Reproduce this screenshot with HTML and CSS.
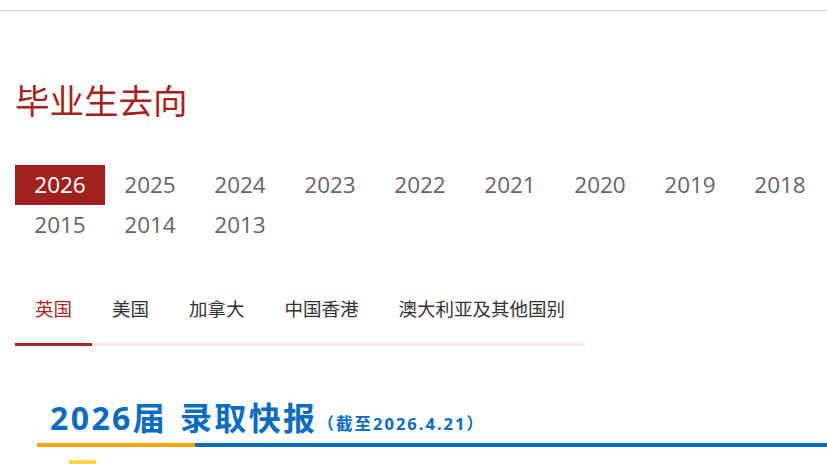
FILE: index.html
```html
<!DOCTYPE html>
<html lang="zh-CN">
<head>
<meta charset="utf-8">
<title>毕业生去向</title>
<link rel="stylesheet" href="styles.css">
</head>
<body>
<div class="topbar"></div>
<main class="page">
  <h1 class="title">毕业生去向</h1>
  <ul class="years">
    <li class="year active">2026</li>
    <li class="year">2025</li>
    <li class="year">2024</li>
    <li class="year">2023</li>
    <li class="year">2022</li>
    <li class="year">2021</li>
    <li class="year">2020</li>
    <li class="year">2019</li>
    <li class="year">2018</li>
    <li class="year">2015</li>
    <li class="year">2014</li>
    <li class="year">2013</li>
  </ul>
  <div class="tabs-wrap">
    <ul class="tabs">
      <li class="tab active">英国</li>
      <li class="tab">美国</li>
      <li class="tab">加拿大</li>
      <li class="tab">中国香港</li>
      <li class="tab">澳大利亚及其他国别</li>
    </ul>
  </div>
  <section class="report">
    <div class="report-head">
      <h2 class="report-title">2026届 录取快报</h2>
      <span class="report-date">（截至2026.4.21）</span>
    </div>
    <div class="report-line"></div>
    <div class="report-badge"></div>
  </section>
</main>
</body>
</html>
```
FILE: styles.css
```css
html, body {
  margin: 0;
  padding: 0;
  background: #fff;
  overflow: hidden;
}
body {
  font-family: "Open Sans", "Noto Sans CJK SC", sans-serif;
  width: 827px;
  height: 464px;
}
.topbar {
  height: 10px;
  border-bottom: 1px solid #d4d4d4;
}
.page {
  padding-left: 15px;
}
.title {
  margin: 71px 0 0 0;
  font-family: "Noto Sans CJK SC", sans-serif;
  font-weight: 400;
  font-size: 34.5px;
  line-height: 34px;
  color: #a3231f;
}
.years {
  list-style: none;
  margin: 49px 0 0 0;
  padding: 0;
  width: 810px;
  display: flex;
  flex-wrap: wrap;
}
.year {
  width: 90px;
  height: 40px;
  line-height: 40px;
  text-align: center;
  font-size: 22.5px;
  color: #666;
}
.year.active {
  background: #a0221f;
  color: #fff;
}
.tabs-wrap {
  margin-top: 48px;
}
.tabs {
  list-style: none;
  margin: 0;
  padding: 0;
  display: inline-flex;
}
.tab {
  padding: 0 20px 20px;
  line-height: 30px;
  font-family: "Noto Sans CJK SC", sans-serif;
  font-size: 18.5px;
  color: #333;
  border-bottom: 3px solid #fde6e6;
}
.tab.active {
  color: #a52825;
  border-bottom-color: #a52825;
}
.report {
  margin: 47px 0 0 22px;
}
.report-head {
  display: flex;
  align-items: baseline;
  padding-left: 13px;
  height: 50px;
}
.report-title {
  margin: 0;
  font-family: "Open Sans", "Noto Sans CJK SC", sans-serif;
  font-weight: 700;
  font-size: 32px;
  letter-spacing: 2.4px;
  word-spacing: 2px;
  line-height: 49px;
  color: #0a6cbd;
}
.report-date {
  margin-left: 0;
  font-family: "Open Sans", "Noto Sans CJK SC", sans-serif;
  font-weight: 700;
  font-size: 16.5px;
  letter-spacing: 2px;
  color: #0a6cbd;
}
.report-line {
  height: 4px;
  background: linear-gradient(to right, #f5a800 158px, #0a6cbd 158px);
}
.report-badge {
  margin: 13px 0 0 32px;
  width: 27px;
  height: 4px;
  background: #ffd34f;
}
```
